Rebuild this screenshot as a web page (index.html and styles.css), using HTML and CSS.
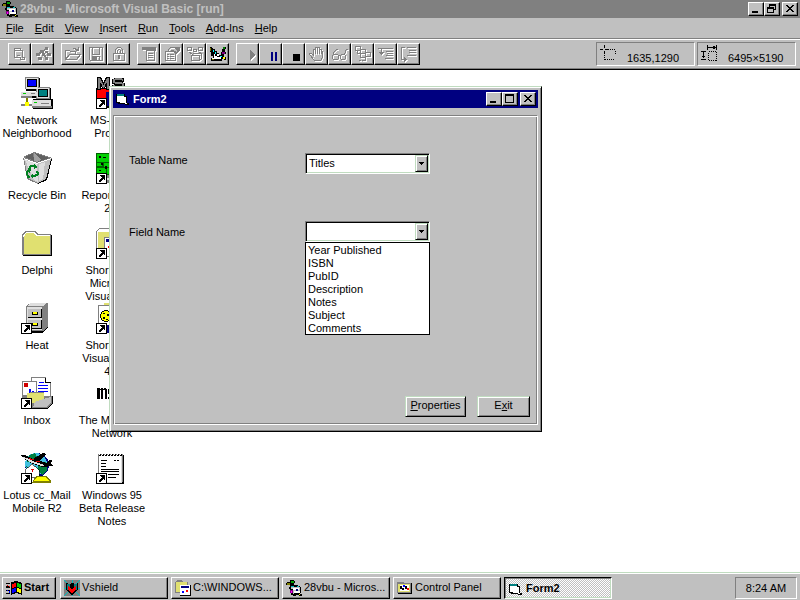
FILE: index.html
```html
<!DOCTYPE html>
<html lang="en">
<head>
<meta charset="utf-8">
<title>28vbu - Microsoft Visual Basic [run]</title>
<link rel="stylesheet" href="styles.css">
</head>
<body>
<svg class="defs" aria-hidden="true">
  <defs>
    <symbol id="shortcut" viewBox="0 0 11 11">
      <path fill="#000" d="M0 0h11v11H0z"/><path fill="#fff" d="M1 1h9v9H1z"/>
      <path fill="#000" d="M4 2h5v5H8V6H7v1H6v1H5v1H3V7h1V6h1V5h1V4H5V3H4z"/>
    </symbol>
    <symbol id="form" viewBox="0 0 16 16">
      <path fill="#000" d="M2 3h8v2h2v7h2v2h-4v-1H3v-1H1V3z"/>
      <path fill="#fff" d="M2 5h7v1h2v6H5v-1H2z"/><path fill="#008080" d="M2 3h7v2H2z"/><path fill="#fff" d="M10 12h2v1h-2z"/>
    </symbol>
    <symbol id="vb" viewBox="0 0 16 16">
      <path fill="#000" d="M4 0h4v1h1v2H8v2h4v1h2v1h1v6h-1v1h2v2h-3v-1h-3v1H7v-1H5v-2H4V9H3V7h1V5H0V3h1V2h3z"/>
      <path fill="#00a000" d="M5 1h3v2H5z"/><path fill="#808000" d="M1 3h3v2H1z"/>
      <path fill="#c0c0c0" d="M5 7h9v6H8v1H7V9H5z"/><path fill="#fff" d="M7 8h6v2H7zM8 11h6v2H8z"/>
      <path fill="#00c0c0" d="M5 6h3v1H5zM11 6h2v1h-2z"/><path fill="#000080" d="M10 9h2v2h-2z"/>
      <path fill="#800080" d="M4 10h3v3H4z"/><path fill="#ff00ff" d="M5 11h1v2H5z"/><path fill="#ffff00" d="M13 14h1v1h-1z"/>
    </symbol>
    <symbol id="min" viewBox="0 0 12 10"><path d="M2 7h6v2H2z"/></symbol>
    <symbol id="max" viewBox="0 0 12 10"><path fill-rule="evenodd" d="M1 0h9v9H1zM2 2v6h7V2z"/></symbol>
    <symbol id="restore" viewBox="0 0 12 10"><path fill-rule="evenodd" d="M3 0h7v6H8v3H1V3h2zM4 2v1h4v2h1V2zM2 5v3h5V5z"/></symbol>
    <symbol id="close" viewBox="0 0 12 10"><path d="M2 1h2v1h1v1h2V2h1V1h2v1H9v1H8v1H7v1h1v1h1v1h1v1H8V7H7V6H5v1H4v1H2V7h1V6h1V5h1V4H4V3H3V2H2z"/></symbol>
    <symbol id="caret" viewBox="0 0 5 3"><path d="M0 0h5v1H4v1H3v1H2V2H1V1H0z"/></symbol>
  </defs>
</svg>

<header class="app">
  <div class="titlebar app-title">
    <svg class="i16" aria-hidden="true"><use href="#vb"/></svg>
    <h1 class="title">28vbu - Microsoft Visual Basic [run]</h1>
    <div class="controls">
      <button class="ctl" aria-label="Minimize"><svg><use href="#min"/></svg></button>
      <button class="ctl" aria-label="Restore"><svg><use href="#restore"/></svg></button>
      <button class="ctl ctl-close" aria-label="Close"><svg><use href="#close"/></svg></button>
    </div>
  </div>
  <nav class="menu">
    <button><u>F</u>ile</button><button><u>E</u>dit</button><button><u>V</u>iew</button><button><u>I</u>nsert</button><button><u>R</u>un</button><button><u>T</u>ools</button><button><u>A</u>dd-Ins</button><button><u>H</u>elp</button>
  </nav>
  <div class="toolbar">
    <div class="group">
      <button class="tool" aria-label="New form" disabled><svg viewBox="0 0 16 16"><path class="ln" d="M2.500 2.500h6v2h2v7h2v2h-4v-2h-6zM2 4.500h6M5 9.500h3"/></svg></button>
      <button class="tool" aria-label="New module" disabled><svg viewBox="0 0 16 16"><path class="fl" d="M10 1h3v3h-3zM5 4h4v3H5zM1 7h4v3H1zM7 7h3v3H7zM12 7h4v3h-4zM3 11h4v3H3zM10 11h3v3h-3zM9 3h1v2H9zM4 6h2v2H4zM9 9h2v2H9zM10 5h3v2h-3z"/></svg></button>
    </div>
    <div class="group">
      <button class="tool" aria-label="Open project" disabled><svg viewBox="0 0 16 16"><path class="ln" d="M0.500 13.500v-9h4l1 1h5v3M0.500 13.500l4-5h11l-4 5zM8 2.500h2l1 1h3M13.500 1v3h-3"/></svg></button>
      <button class="tool" aria-label="Save project" disabled><svg viewBox="0 0 16 16"><path class="ln" d="M1.500 1.500h13v13h-12l-1-1zM4.500 2v6h7V2M4.500 14v-4h7v4"/><path class="fl" d="M5 11h4v3H5z"/></svg></button>
      <button class="tool" aria-label="Lock controls" disabled><svg viewBox="0 0 16 16"><path class="ln" d="M2.500 7.500h11v7h-11zM4.500 7V3.500l2-2h3l2 2V7M6.500 7V4.500l1-1h1l1 1V7"/><path class="fl" d="M7 9h2v4H7z"/></svg></button>
    </div>
    <div class="group">
      <button class="tool" aria-label="Menu editor" disabled><svg viewBox="0 0 16 16"><path class="fl" d="M1 1h14v4H5V4H1z"/><path class="ln" d="M5.500 4.500h8v10h-8zM7 7.500h5M7 9.500h5M7 11.500h5"/></svg></button>
      <button class="tool" aria-label="Properties window" disabled><svg viewBox="0 0 16 16"><path class="ln" d="M1.500 5.500h10v9h-10zM3 8.500h2M6 8.500h4M3 10.500h2M6 10.500h4M3 12.500h2M6 12.500h4M4 5V3.500l3-2h4l3 4-2 2-3-3H7"/><path class="fl" d="M12 1h4v4h-3z"/></svg></button>
      <button class="tool" aria-label="Object browser" disabled><svg viewBox="0 0 16 16"><path class="ln" d="M0.500 1.500h4v3h-4zM6.500 3.500h3v2h-3zM11.500 1.500h4v3h-4zM2 6l3 2M14 6l-3 2M4.500 9.500h8v5h-8zM4.500 9.500l2-2h8v5l-2 2"/></svg></button>
      <button class="tool" aria-label="Project window"><svg viewBox="0 0 16 16"><path d="M0 1h2v1h1v1h2v2h2v2h2v2h2V6h1V3h1V1h3v2h-1v3h1v2h-2v3h2v3h-2v-1h-2v2H1v-3h2v-2H1V6H0z"/><path fill="#fff" d="M4 8h1v2h2v1h4v2H2v-1h2zM7 8h2v2H7z"/><path fill="#0ff" d="M3 4h1v2H3zM5 6h1v2H5zM10 10h2v1h-2z"/><path fill="#808000" d="M0 2h1v3H0zM2 13h2v1H2z"/><path fill="#008000" d="M13 1h2v2h-2z"/><path fill="#800080" d="M12 6h3v2h-3z"/><path fill="#ff0" d="M13 11h2v2h-2z"/></svg></button>
    </div>
    <div class="group">
      <button class="tool" aria-label="Start" disabled><svg viewBox="0 0 16 16"><path class="fl" d="M10 4l5 5-5 5z"/></svg></button>
      <button class="tool" aria-label="Break"><svg viewBox="0 0 16 16"><path fill="#000080" d="M8 6h2v9H8zM12 6h2v9h-2z"/></svg></button>
      <button class="tool" aria-label="End"><svg viewBox="0 0 16 16"><path d="M7 8h7v7H7z"/></svg></button>
      <button class="tool" aria-label="Toggle breakpoint" disabled><svg viewBox="0 0 16 16"><path class="ln" d="M5.500 14.500l-5-6v-1h2l2 2v-6h2V8V1.500h2V8V1.500h2V8V3.500h2V8V5.500h1v6l-2 3z"/></svg></button>
      <button class="tool" aria-label="Instant watch" disabled><svg viewBox="0 0 16 16"><path class="ln" d="M1.500 8.500h4l1 1v3l-1 1h-4l-1-1v-3zM9.500 8.500h3l1 1v3l-1 1h-3l-1-1v-3zM6 9.500h2M1.500 8V6.500l3-3h1M12.500 8l2-5h1.500"/></svg></button>
      <button class="tool" aria-label="Calls" disabled><svg viewBox="0 0 16 16"><path class="ln" d="M0.500 0.500h5v4h-5zM5.500 3.500h5v4h-5zM10.500 6.500h5v4h-5zM2.500 5v2.500h3v4h5v3h-4M4 14.500h2"/></svg></button>
      <button class="tool" aria-label="Step into" disabled><svg viewBox="0 0 16 16"><path class="ln" d="M0 2.500h15M8 5.500h7M9 7.500h6M8 9.500h7M7 12.500h8M3.500 3v5"/><path class="fl" d="M1 6h5L3.500 9z"/></svg></button>
      <button class="tool" aria-label="Step over" disabled><svg viewBox="0 0 16 16"><path class="ln" d="M0.500 14V1.500h3M6 1.500h9M8 4.500h7M8 6.500h7M6 9.500h9M1 13.500h2"/><path class="fl" d="M3 11l3 2.500L3 16z"/></svg></button>
    </div>
    <div class="readouts">
      <output class="readout"><svg class="i16" aria-hidden="true"><path stroke="#000" d="M0 4.500h3M5 4.500h3M4.500 0v3M4.500 6v2"/><path stroke="#000" stroke-dasharray="1 1" d="M8 4.500h8M4.500 8v8M15.500 6v4M5 14.500h9"/></svg><span>1635,1290</span></output>
      <output class="readout"><svg class="i16" aria-hidden="true"><path d="M6 0h1v5H6zM15 0h1v5h-1zM7 2h8v1H7zM12 1h2v3h-2zM0 6h5v1H0zM2 7h1v6H2zM1 11h3v1H1zM0 14h5v1H0z"/><path fill="none" stroke="#000" stroke-dasharray="1 1" d="M7.500 6.500h8v9h-8z"/></svg><span>6495×5190</span></output>
    </div>
  </div>
</header>

<main class="desktop">
  <div class="icons">
    <a class="icon" href="#network">
      <svg viewBox="0 0 32 32"><path d="M5 1h14v13H5zM1 15h18v6H1zM16 11h14v12H16zM12 22h20v10H12z"/><path fill="#808080" d="M4 0h14v12H4zM15 10h14v12H15z"/><path fill="#dfdfdf" d="M5 1h12v11H5zM0 15h17v4H0zM16 11h12v10H16zM11 23h19v7H11z"/><path fill="#000" d="M6 2h10v8H6zM17 12h10v8H17z"/><path fill="#0000ff" d="M7 3h8v6H7z"/><path fill="#008080" d="M18 13h8v6h-8z"/><path fill="#808080" d="M0 19h11v2H0zM11 29h20v2H11zM20 26h8v1h-8zM10 16h4v1h-4z"/><path fill="#00d000" d="M2 16h3v1H2zM13 25h3v1h-3z"/><path fill="#808000" d="M5 21h2v5H5z"/><path fill="#808080" d="M0 27h11v2H0z"/><path fill="#ffff00" d="M4 25h4v4H4z"/></svg>
      <span>Network<br>Neighborhood</span></a>
    <a class="icon" href="#recycle">
      <svg viewBox="0 0 32 32"><path fill="#808080" d="M2 5L13 0l18 6-6 22-8 4-11-5z"/><path fill="#000" d="M30 7h1l-5 21-9 4v-1l8-4z"/><path fill="#c0c0c0" d="M3 7l13 5 1 19-10-5zM16 12l14-5-5 20-8 4z"/><path fill="#dfdfdf" d="M4 8l12 4 1 18-4-2zM18 12l6-2-2 17-4 2z"/><path fill="#fff" d="M2 5l1 1 13 5 14-5v1l-14 5L3 7z"/><path fill="#606060" d="M4 5l8-4 1 8zM14 1l14 5-12 4z"/><path fill="#a0a0a0" d="M13 1l7 7-4 2-3-1z"/><g fill="none" stroke="#008020" stroke-width="2"><path d="M8 17l2-3h4M16 19l1 3-3 2h-2M9 25H7l-1-5 2-2"/></g><path fill="#008020" d="M13 12l4 3-4 2zM12 21v6l-3-3zM5 18l5-1-1 4z"/></svg>
      <span>Recycle Bin</span></a>
    <a class="icon" href="#delphi">
      <svg viewBox="0 0 32 32"><path d="M2 8h29v21H2z"/><path fill="#808080" d="M1 8l3-4h10l3 3h13v21H1z"/><path fill="#fff" d="M2 8l3-3h8l3 3h13v2H2z"/><path class="manila" d="M3 9h26v18H3zM5 6h8l2 3H4z"/></svg>
      <span>Delphi</span></a>
    <a class="icon" href="#heat">
      <svg viewBox="0 0 32 32"><path d="M6 5h18l3-4v24l-5 6H6z"/><path fill="#808080" d="M5 4l5-3h17v24l-5 4H5z"/><path fill="#dfdfdf" d="M6 4l4-3h16l-4 3zM6 5h15v23H6z"/><path d="M7 7h14v9H7zM7 18h14v9H7z"/><path fill="#c0c0c0" d="M7 7h13v8H7zM7 18h13v8H7z"/><path d="M11 10h6v3h-6zM11 21h6v3h-6z"/><path fill="#ff0" d="M12 10h4v2h-4zM12 21h4v2h-4z"/><use href="#shortcut" y="21" width="11" height="11"/></svg>
      <span>Heat</span></a>
    <a class="icon" href="#inbox">
      <svg viewBox="0 0 32 32"><path fill="#fff" stroke="#808080" d="M10.500 0.500h14l5 5v16h-19z"/><path fill="#fff" stroke="#000" d="M24.500 0.500v5h5"/><path fill="#fff" stroke="#808080" d="M1.500 4.500h14v17h-14z"/><path fill="#d00000" d="M3 6h4v4H3z"/><path fill="#0000ff" d="M17 8h10v1H17zM17 11h10v1H17zM17 14h10v1H17zM18 5h5v1h-5zM8 12h2v5H8zM11 14h2v3h-2z"/><path d="M2 19h30v8l-6 5H8z"/><path fill="#808080" d="M1 18h5l3-3h14v4h8v8l-5 4H5z"/><path class="manila" d="M6 16h17v6l-5 4H6z"/><path fill="#c0c0c0" d="M14 25l5-2 11-3v6l-5 4H12z"/><use href="#shortcut" y="21" width="11" height="11"/></svg>
      <span>Inbox</span></a>
    <a class="icon" href="#ccmail">
      <svg viewBox="0 0 32 32"><circle cx="16" cy="13" r="12" fill="#000080"/><circle cx="15" cy="12" r="11" fill="#40c0e0"/><path fill="#008040" d="M8 3l6-2 3 5-5 5-6-1zM17 12l8-2 1 8-5 5-4-4zM5 14l5 2-1 4z"/><path fill="#fff" stroke="#000" stroke-width=".6" d="M4 18l7-6 7 6v7H6z"/><path fill="#e00000" d="M10 17h3v1h-1v2h-1v-2h-1z"/><path d="M0 3h4l8 4 10-6 3 1-6 7 6 2 4-3h2l-1 4 2 2-10 1-10-3-10-6z"/><path fill="#dfdfdf" d="M1 5l5 1 8 4 10 3-3 1-10-3z"/><path fill="#e00000" d="M7 6h3v1h3v1H9zM15 9h4v1h-4z"/><path fill="#808000" d="M12 29l3-5h10l5 5v2H11z"/><path fill="#ff0" d="M13 28l3-3h8l4 4H12z"/><use href="#shortcut" y="21" width="11" height="11"/></svg>
      <span>Lotus cc_Mail<br>Mobile R2</span></a>
    <a class="icon" href="#msdos">
      <svg viewBox="0 0 32 32"><path d="M0 11h32v20H0z"/><path fill="#f00" d="M1 12h29v14H1z"/><path fill="#000080" d="M10 15h20v14H10z"/><path fill="#808080" stroke="#000" d="M1.500 12V0.500h3l3 6 3-6h3V12h-3V6l-2 5h-2l-2-5v6z"/><path fill="none" stroke="#000" stroke-width="4" d="M28 3.500l-3-1h-5l-2 1v2l2 1h5l2 1v2l-2 1h-5l-4-1"/><path fill="none" stroke="#808080" stroke-width="2" d="M27 3l-2-1h-5l-2 1v2l2 1h5l2 1v2l-2 1h-5l-3-1"/><use href="#shortcut" y="21" width="11" height="11"/></svg>
      <span>MS-DOS<br>Prompt</span></a>
    <a class="icon" href="#reportsmith">
      <svg viewBox="0 0 32 32"><path fill="#006000" d="M0 1h32v22H0z"/><path fill="#00d000" d="M1 2h30v8H1zM1 11h5v3H1zM8 11h8v4H8zM1 16h9v5H1zM11 16h10v6H11z"/><path d="M3 4h2v2H3zM7 5h3v1H7zM5 11h2v2H5zM9 14h2v3H9zM3 18h2v1H3z"/><path fill="#808080" d="M10 23h20v8H10z"/><path fill="#dfdfdf" d="M11 26h18v2H11z"/><use href="#shortcut" y="21" width="11" height="11"/></svg>
      <span>ReportSmith<br>2.5</span></a>
    <a class="icon" href="#vc">
      <svg viewBox="0 0 32 32"><path fill="#808080" d="M0 4l3-3h9l3 3h14v23H0z"/><path fill="#fff" d="M1 4l2-2h9l3 3h13v20H1z"/><path class="manila" d="M2 5h26v20H2z"/><path fill="#808080" d="M8 10h22v20H8z"/><path fill="#fff" d="M9 11h20v18H9z"/><path fill="#000080" d="M10 12h18v3H10z"/><path fill="#f00" d="M12 19h2v2h-2z"/><use href="#shortcut" y="21" width="11" height="11"/></svg>
      <span>Shortcut to<br>Microsoft<br>Visual C++</span></a>
    <a class="icon" href="#vb4">
      <svg viewBox="0 0 32 32"><path class="manila" d="M8 1h16v4H8z"/><path fill="#fff" stroke="#808080" d="M2.500 3.500h27v27h-27z"/><circle cx="10" cy="14" r="6" fill="#000"/><circle cx="10" cy="14" r="5" fill="#ff0"/><path d="M7 11h2v1H7zM11 12h2v2h-2zM7 15h2v2H7zM10 17h2v1h-2z"/><path fill="#000080" d="M11 23h20v8H11z"/><use href="#shortcut" y="21" width="11" height="11"/></svg>
      <span>Shortcut to<br>Visual Basic<br>4.0</span></a>
    <a class="icon" href="#msn">
      <svg viewBox="0 0 32 32"><path d="M1 11h3v1h1v-1h2v1h1v-1h2v1h1v10H9v-9H7v9H5v-9H4v9H1zM12 12h4v2h-2v2h2v6h-4v-2h2v-3h-2z"/></svg>
      <span>The Microsoft<br>Network</span></a>
    <a class="icon" href="#notes">
      <svg viewBox="0 0 32 32"><path d="M4 3h24v29H4z"/><path fill="#808080" d="M2 2h25v28H2z"/><path fill="#fff" d="M3 3h22v27H3z"/><path fill="#dfdfdf" d="M25 4h1v27H4v-1h21z"/><path d="M3 2h2v2H3zM6 2h2v2H6zM9 2h2v2H9zM12 2h2v2h-2zM15 2h2v2h-2zM18 2h2v2h-2zM21 2h2v2h-2zM24 2h2v2h-2zM5 8h6v1H5zM18 8h2v1h-2zM21 8h2v1h-2zM5 11h5v1H5zM5 14h5v1H5zM5 17h18v1H5zM5 19h18v1H5zM12 22h11v1H12zM12 25h8v1h-8z"/><path fill="#fff" d="M3 1h1v2H3zM6 1h1v2H6zM9 1h1v2H9zM12 1h1v2h-1zM15 1h1v2h-1zM18 1h1v2h-1zM21 1h1v2h-1zM24 1h1v2h-1z"/><use href="#shortcut" y="21" width="11" height="11"/></svg>
      <span>Windows 95<br>Beta Release<br>Notes</span></a>
  </div>

  <section class="window" aria-labelledby="form-title">
    <div class="titlebar form-titlebar">
      <svg class="i16" aria-hidden="true"><use href="#form"/></svg>
      <h2 class="title" id="form-title">Form2</h2>
      <div class="controls">
        <button class="ctl" aria-label="Minimize"><svg><use href="#min"/></svg></button>
        <button class="ctl" aria-label="Maximize"><svg><use href="#max"/></svg></button>
        <button class="ctl ctl-close" aria-label="Close"><svg><use href="#close"/></svg></button>
      </div>
    </div>
    <form class="frame">
      <div class="fields">
        <label for="table">Table Name</label>
        <div class="combo">
          <select id="table"><option>Titles</option></select>
          <span class="drop"><svg><use href="#caret"/></svg></span>
        </div>
        <label for="field" class="mid">Field Name</label>
        <div class="combo">
          <select id="field"><option></option></select>
          <span class="drop"><svg><use href="#caret"/></svg></span>
          <select class="list" size="7" aria-label="Field Name">
            <option>Year Published</option><option>ISBN</option><option>PubID</option><option>Description</option><option>Notes</option><option>Subject</option><option>Comments</option>
          </select>
        </div>
      </div>
      <div class="actions">
        <button type="button" class="push push-wide"><u>P</u>roperties</button>
        <button type="button" class="push">E<u>x</u>it</button>
      </div>
    </form>
  </section>
</main>

<footer class="taskbar">
  <button class="start"><svg class="i16" viewBox="0 0 16 16" aria-hidden="true"><path d="M5 2l5-1 6 2v12l-6-2-5 2zM0 3h4v1H0zM0 6h4v2H0zM0 10h4v1H0zM0 13h4v1H0z"/><path fill="#f00" d="M6 4l4-1v4L6 8zM1 5h1v1H1zM3 6h1v1H3z"/><path fill="#0c0" d="M11 3l4 1v4l-4-1z"/><path fill="#00f" d="M6 9l4-1v4l-4 1zM1 10h1v1H1zM3 11h1v2H3z"/><path fill="#ff0" d="M11 8l4 1v4l-4-1z"/></svg><b>Start</b></button>
  <nav class="tasks">
    <button class="task"><svg class="i16" viewBox="0 0 16 16" aria-hidden="true"><path fill="#808080" d="M0 0h16v16H0z"/><path stroke="#00c0c0" d="M0 0l16 16M16 0L0 16M8 0v16M0 8h16"/><path d="M2 3l3 1 3-1 3 1 3-1v7l-6 5-6-5z"/><path fill="#008080" d="M3 4h3v6H3zM10 4h3v6h-3z"/><path fill="#f00" d="M4 5l4 5 4-5v4l-4 5-4-5z"/></svg><span>Vshield</span></button>
    <button class="task"><svg class="i16" viewBox="0 0 16 16" aria-hidden="true"><path fill="#808080" d="M0 2l2-2h4l2 2h5v11H0z"/><path class="manila" d="M1 2h11v10H1z"/><path d="M5 5h11v11H5z"/><path fill="#fff" d="M5 5h10v10H5z"/><path fill="#000080" d="M6 6h8v2H6z"/><path fill="#00f" d="M7 11h2v2H7z"/><path fill="#f00" d="M11 10h2v2h-2z"/></svg><span>C:\WINDOWS...</span></button>
    <button class="task"><svg class="i16" aria-hidden="true"><use href="#vb"/></svg><span>28vbu - Micros...</span></button>
    <button class="task"><svg class="i16" viewBox="0 0 16 16" aria-hidden="true"><path d="M1 3h14v11H1z"/><path fill="#808080" d="M0 2h6l1 1h7v10H0z"/><path class="manila" d="M1 4h12v8H1z"/><path fill="#fff" d="M3 5h9v6H3z"/><path d="M3 6h2v2h2v2H5V9H3zM8 6h2v3H8z"/><path fill="#00f" d="M6 5h2v2H6z"/><path fill="#f00" d="M10 8h2v2h-2z"/></svg><span>Control Panel</span></button>
    <button class="task active"><svg class="i16" aria-hidden="true"><use href="#form"/></svg><b>Form2</b></button>
  </nav>
  <time class="clock">8:24 AM</time>
</footer>
</body>
</html>
```
FILE: styles.css
```css
:root {
  --face: #c0c0c0;
  --shade: #808080;
  --light: #c0dcc0;
  --navy: #000080;
}
* { box-sizing: border-box; }
body {
  margin: 0;
  height: 100vh;
  display: flex;
  flex-direction: column;
  overflow: hidden;
  background: #fff;
  color: #000;
  font: 11px/13px "Liberation Sans", Arial, sans-serif;
}
button, select {
  font: inherit;
  color: inherit;
  margin: 0;
  padding: 0;
  border: 0;
  border-radius: 0;
  background: none;
}
svg { display: block; flex: none; shape-rendering: crispEdges; }
u { text-underline-offset: 1px; }
.defs { position: absolute; width: 0; height: 0; }
.i16 { width: 16px; height: 16px; }
.manila { fill: #e0e070; }

.titlebar {
  display: flex;
  align-items: center;
  gap: 2px;
  height: 18px;
  padding: 0 2px;
}
.title { margin: 0; flex: 1; font-size: 12px; line-height: 16px; font-weight: bold; }
.app { background: var(--face); }
.app-title { background: var(--shade); color: var(--face); }
.controls { display: flex; }
.ctl {
  width: 16px;
  height: 14px;
  padding: 1px;
  background: var(--face);
  border: 1px solid #000;
  border-top-color: #fff;
  border-left-color: #fff;
  box-shadow: inset -1px -1px var(--shade);
}
.ctl svg { width: 12px; height: 10px; }
.ctl-close { margin-left: 2px; }

.menu { display: flex; height: 20px; }
.menu button { padding: 0 5px 0 6px; }
.toolbar {
  display: flex;
  align-items: center;
  gap: 7px;
  height: 32px;
  padding: 0 4px 0 8px;
  border-top: 1px solid var(--shade);
  border-bottom: 1px solid #000;
  box-shadow: inset 0 1px #fff, inset 0 -1px var(--shade);
}
.group { display: flex; }
.tool {
  display: flex;
  align-items: center;
  width: 23px;
  height: 22px;
  padding-left: 3px;
  border: 1px solid #000;
  border-top-color: #fff;
  border-left-color: #fff;
  box-shadow: inset -1px -1px var(--shade);
}
.tool svg { width: 16px; height: 16px; }
.tool:disabled svg { filter: drop-shadow(1px 1px 0 #fff); }
.ln { fill: none; stroke: var(--shade); }
.fl { fill: var(--shade); }
.readouts { display: flex; gap: 2px; margin-left: auto; }
.readout {
  display: flex;
  align-items: flex-start;
  gap: 11px;
  width: 99px;
  height: 24px;
  padding: 2px 3px 0;
  border: 1px solid #fff;
  border-top-color: var(--shade);
  border-left-color: var(--shade);
}
.readout span { padding-top: 7px; }

.desktop { position: relative; flex: 1; min-height: 0; }
.icons {
  display: grid;
  grid-auto-flow: column;
  grid-template-rows: repeat(6, 75px);
  grid-auto-columns: 74px;
  column-gap: 1px;
  padding-top: 7px;
  width: max-content;
}
.icon {
  display: flex;
  flex-direction: column;
  align-items: center;
  gap: 5px;
  color: #000;
  text-align: center;
  text-decoration: none;
  white-space: nowrap;
}
.icon svg { width: 32px; height: 32px; }

.window {
  position: absolute;
  left: 109px;
  top: 16px;
  display: flex;
  flex-direction: column;
  gap: 7px;
  width: 433px;
  height: 346px;
  padding: 3px 3px 6px;
  background: var(--face);
  border: 1px solid #000;
  border-top-color: var(--light);
  border-left-color: var(--light);
  box-shadow: inset 1px 1px #fff, inset -1px -1px var(--shade);
}
.form-titlebar { background: var(--navy); color: #fff; }
.form-titlebar .title { font-size: 11px; }
.frame {
  flex: 1;
  display: flex;
  flex-direction: column;
  justify-content: space-between;
  padding: 37px 7px 7px 15px;
  border: 1px solid #fff;
  border-top-color: var(--shade);
  border-left-color: var(--shade);
  box-shadow: inset 1px 1px #fff, inset -1px -1px var(--shade);
}
.fields {
  display: grid;
  grid-template-columns: 176px 125px;
  row-gap: 47px;
}
.fields label { padding-top: 1px; }
.mid { align-self: center; }
.combo {
  position: relative;
  display: flex;
  height: 21px;
  padding: 1px;
  background: #fff;
  border: 1px solid #fff;
  border-top-color: var(--shade);
  border-left-color: var(--shade);
  box-shadow: inset 1px 1px #000, inset -1px -1px var(--light);
}
.combo select {
  appearance: none;
  flex: 1;
  padding-left: 2px;
  outline: 0;
}
.drop {
  position: absolute;
  top: 1px;
  right: 1px;
  bottom: 1px;
  width: 13px;
  display: grid;
  place-items: center;
  background: var(--face);
  border: 1px solid #000;
  border-top-color: var(--light);
  border-left-color: var(--light);
  box-shadow: inset 1px 1px #fff, inset -1px -1px var(--shade);
  pointer-events: none;
}
.drop svg { width: 5px; height: 3px; }
.combo .list {
  position: absolute;
  top: 20px;
  left: -1px;
  width: 125px;
  height: 93px;
  padding: 1px 0 0;
  overflow: hidden;
  background: #fff;
  border: 1px solid #000;
}
.list option { min-height: 13px; padding: 0 2px; line-height: 13px; }
.actions { display: flex; justify-content: flex-end; gap: 11px; }
.push {
  width: 53px;
  height: 21px;
  padding-bottom: 2px;
  border: 1px solid #000;
  border-top-color: var(--light);
  border-left-color: var(--light);
  box-shadow: inset 1px 1px #fff, inset -1px -1px var(--shade);
}
.push-wide { width: 61px; }

.taskbar {
  display: flex;
  align-items: center;
  gap: 4px;
  height: 28px;
  padding: 2px 3px 0 2px;
  background: var(--face);
  border-top: 1px solid var(--light);
  box-shadow: inset 0 1px #fff;
}
.start, .task {
  display: flex;
  align-items: center;
  gap: 2px;
  height: 22px;
  padding: 0 3px;
  border: 1px solid #000;
  border-top-color: #fff;
  border-left-color: #fff;
  box-shadow: inset -1px -1px var(--shade);
  white-space: nowrap;
}
.start { width: 54px; }
.tasks { display: flex; gap: 3px; flex: 1; }
.task { flex: 0 1 108px; }
.task.active {
  padding-top: 2px;
  border-color: #000 #fff #fff #000;
  box-shadow: inset 1px 1px var(--shade), inset -1px -1px var(--light);
  background: repeating-conic-gradient(#fff 0 25%, var(--face) 0 50%) 0 0 / 2px 2px;
}
.clock {
  width: 62px;
  height: 22px;
  line-height: 21px;
  text-align: center;
  border: 1px solid #fff;
  border-top-color: var(--shade);
  border-left-color: var(--shade);
}
```
